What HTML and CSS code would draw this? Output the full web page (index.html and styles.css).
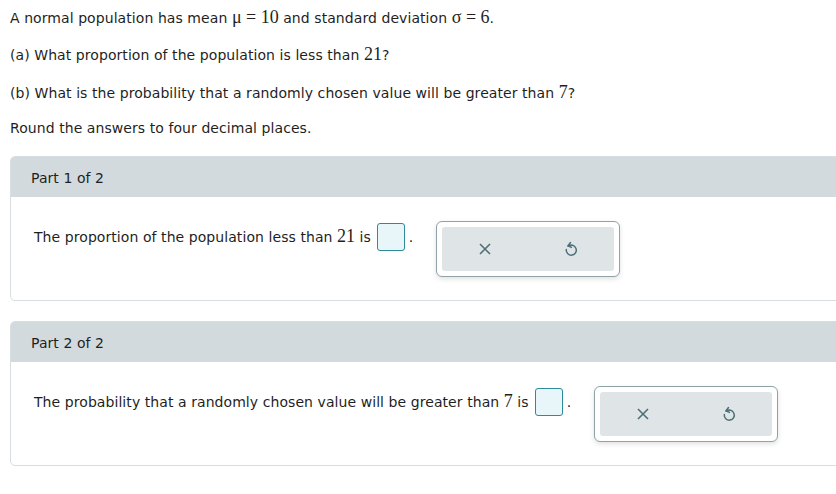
FILE: index.html
```html
<!DOCTYPE html>
<html>
<head>
<meta charset="utf-8">
<link rel="stylesheet" href="styles.css">
</head>
<body>
<div class="intro">
  <p class="l1">A normal population has mean <span class="m">μ = 10</span> and standard deviation <span class="m">σ = 6</span>.</p>
  <p class="l2">(a) What proportion of the population is less than <span class="m">21</span>?</p>
  <p class="l3">(b) What is the probability that a randomly chosen value will be greater than <span class="m">7</span>?</p>
  <p class="l4">Round the answers to four decimal places.</p>
</div>

<div class="card">
  <div class="card-head">Part 1 of 2</div>
  <div class="card-body">
    <div class="answer">
      <span>The proportion of the population less than <span class="m">21</span> is</span>
      <span class="box"></span>
      <span class="dot">.</span>
    </div>
    <div class="tools">
      <div class="tools-in">
        <div class="tool">
          <svg width="12" height="12" viewBox="0 0 12 12"><path d="M1 1 L11 11 M11 1 L1 11" stroke="#4f6f78" stroke-width="1.6" fill="none"/></svg>
        </div>
        <div class="tool">
          <svg width="14" height="16" viewBox="0 0 14 16"><path d="M4.2 5.2 A5 5 0 1 1 2.3 8.6" stroke="#4f6f78" stroke-width="1.5" fill="none" stroke-linecap="round"/><path d="M6.5 1.5 L4 4.8 L7.4 6.4" stroke="#4f6f78" stroke-width="1.5" fill="none" stroke-linecap="round" stroke-linejoin="round"/></svg>
        </div>
      </div>
    </div>
  </div>
</div>

<div class="card">
  <div class="card-head">Part 2 of 2</div>
  <div class="card-body">
    <div class="answer">
      <span>The probability that a randomly chosen value will be greater than <span class="m">7</span> is</span>
      <span class="box"></span>
      <span class="dot">.</span>
    </div>
    <div class="tools">
      <div class="tools-in">
        <div class="tool">
          <svg width="12" height="12" viewBox="0 0 12 12"><path d="M1 1 L11 11 M11 1 L1 11" stroke="#4f6f78" stroke-width="1.6" fill="none"/></svg>
        </div>
        <div class="tool">
          <svg width="14" height="16" viewBox="0 0 14 16"><path d="M4.2 5.2 A5 5 0 1 1 2.3 8.6" stroke="#4f6f78" stroke-width="1.5" fill="none" stroke-linecap="round"/><path d="M6.5 1.5 L4 4.8 L7.4 6.4" stroke="#4f6f78" stroke-width="1.5" fill="none" stroke-linecap="round" stroke-linejoin="round"/></svg>
        </div>
      </div>
    </div>
  </div>
</div>
</body>
</html>
```
FILE: styles.css
```css
html, body {
  margin: 0;
  padding: 0;
  overflow: hidden;
  background: #fff;
}
body {
  font-family: "DejaVu Sans", Verdana, sans-serif;
  font-size: 14px;
  letter-spacing: 0.07px;
  color: #1f1f1f;
  padding: 8px 0 0 10px;
  width: 900px;
}
p {
  margin: 0;
  line-height: 20px;
}
.l2 { margin-top: 17px; }
.l3 { margin-top: 18px; }
.l4 { margin-top: 15px; }
.intro { margin-bottom: 18px; }
.m {
  font-family: "Liberation Serif", "Times New Roman", serif;
  font-size: 18px;
  line-height: 14px;
  letter-spacing: 0;
}
.card {
  border: 1px solid #d6dee1;
  border-radius: 5px;
  margin-bottom: 20px;
  overflow: hidden;
}
.card-head {
  background: #d2dadd;
  height: 39px;
  padding-top: 2px;
  line-height: 41px;
  padding-left: 20px;
  margin-top: -1px;
}
.card-body {
  display: flex;
  align-items: flex-start;
  padding: 24px 23px 23px 23px;
}
.answer {
  display: flex;
  align-items: center;
  height: 29px;
  margin-top: 1px;
}
.box {
  display: inline-block;
  width: 26px;
  height: 26px;
  border: 1.5px solid #2d8a99;
  border-radius: 3px;
  background: #e8f5f9;
  margin-left: 6px;
}
.dot {
  margin-left: 4px;
}
.tools {
  margin-left: 23px;
  border: 1px solid #8ea2a8;
  border-radius: 6px;
  padding: 5px;
  background: #fff;
  box-shadow: 0 2px 5px rgba(0,0,0,0.12);
}
.tools-in {
  display: flex;
  background: #dfe5e7;
  border-radius: 3px;
  width: 172px;
  height: 44px;
}
.tool {
  flex: 1;
  display: flex;
  align-items: center;
  justify-content: center;
}
```
